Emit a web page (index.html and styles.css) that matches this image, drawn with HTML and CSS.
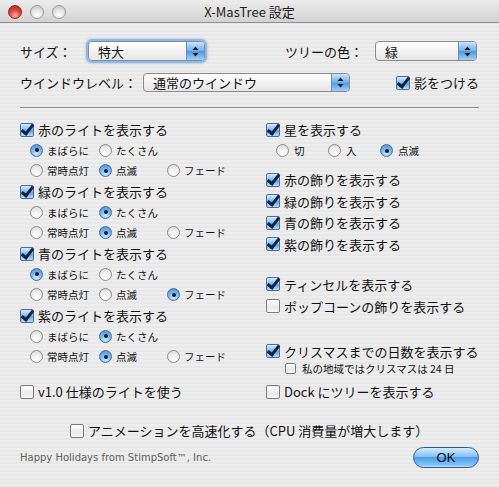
FILE: index.html
```html
<!DOCTYPE html>
<html lang="ja">
<head>
  <meta charset="UTF-8">
  <title>X-MasTree 設定</title>
  <link rel="stylesheet" href="styles.css">
</head>
<body>
  <div class="window">
    <div class="titlebar">
      <div class="lights">
        <span class="light close"></span>
        <span class="light"></span>
        <span class="light"></span>
      </div>
      <div class="title">X-MasTree 設定</div>
      <div></div>
    </div>

    <div class="content">
      <div class="top-row first">
        <span class="label size-label">サイズ：</span>
        <div class="popup focused size-popup">
          <span>特大</span>
          <span class="arrows"><svg width="7" height="11" viewBox="0 0 7 11"><path d="M3.5 0.5 L6.5 4 L0.5 4 Z M3.5 10.5 L6.5 7 L0.5 7 Z" fill="#1a1a1a"/></svg></span>
        </div>
        <span class="label color-label">ツリーの色：</span>
        <div class="popup color-popup">
          <span>緑</span>
          <span class="arrows"><svg width="7" height="11" viewBox="0 0 7 11"><path d="M3.5 0.5 L6.5 4 L0.5 4 Z M3.5 10.5 L6.5 7 L0.5 7 Z" fill="#1a1a1a"/></svg></span>
        </div>
      </div>

      <div class="top-row second">
        <span class="label level-label">ウインドウレベル：</span>
        <div class="popup level-popup">
          <span>通常のウインドウ</span>
          <span class="arrows"><svg width="7" height="11" viewBox="0 0 7 11"><path d="M3.5 0.5 L6.5 4 L0.5 4 Z M3.5 10.5 L6.5 7 L0.5 7 Z" fill="#1a1a1a"/></svg></span>
        </div>
        <label class="check shadow-check"><span class="cb on"></span>影をつける</label>
      </div>

      <hr class="sep">

      <div class="columns">
        <div class="col left">
          <div class="group">
            <label class="check"><span class="cb on"></span>赤のライトを表示する</label>
            <div class="radios">
              <span class="radio w1"><span class="rb on"></span>まばらに</span>
              <span class="radio"><span class="rb"></span>たくさん</span>
            </div>
            <div class="radios">
              <span class="radio w1"><span class="rb"></span>常時点灯</span>
              <span class="radio w2"><span class="rb on"></span>点滅</span>
              <span class="radio"><span class="rb"></span>フェード</span>
            </div>
          </div>
          <div class="group">
            <label class="check"><span class="cb on"></span>緑のライトを表示する</label>
            <div class="radios">
              <span class="radio w1"><span class="rb"></span>まばらに</span>
              <span class="radio"><span class="rb on"></span>たくさん</span>
            </div>
            <div class="radios">
              <span class="radio w1"><span class="rb"></span>常時点灯</span>
              <span class="radio w2"><span class="rb on"></span>点滅</span>
              <span class="radio"><span class="rb"></span>フェード</span>
            </div>
          </div>
          <div class="group">
            <label class="check"><span class="cb on"></span>青のライトを表示する</label>
            <div class="radios">
              <span class="radio w1"><span class="rb on"></span>まばらに</span>
              <span class="radio"><span class="rb"></span>たくさん</span>
            </div>
            <div class="radios">
              <span class="radio w1"><span class="rb"></span>常時点灯</span>
              <span class="radio w2"><span class="rb"></span>点滅</span>
              <span class="radio"><span class="rb on"></span>フェード</span>
            </div>
          </div>
          <div class="group">
            <label class="check"><span class="cb on"></span>紫のライトを表示する</label>
            <div class="radios">
              <span class="radio w1"><span class="rb"></span>まばらに</span>
              <span class="radio"><span class="rb on"></span>たくさん</span>
            </div>
            <div class="radios">
              <span class="radio w1"><span class="rb"></span>常時点灯</span>
              <span class="radio w2"><span class="rb on"></span>点滅</span>
              <span class="radio"><span class="rb"></span>フェード</span>
            </div>
          </div>
          <label class="check last"><span class="cb"></span>v1.0 仕様のライトを使う</label>
        </div>

        <div class="col right">
          <label class="check"><span class="cb on"></span>星を表示する</label>
          <div class="radios star">
            <span class="radio s1"><span class="rb"></span>切</span>
            <span class="radio s1"><span class="rb"></span>入</span>
            <span class="radio"><span class="rb on"></span>点滅</span>
          </div>
          <div class="decor">
            <label class="check"><span class="cb on"></span>赤の飾りを表示する</label>
            <label class="check"><span class="cb on"></span>緑の飾りを表示する</label>
            <label class="check"><span class="cb on"></span>青の飾りを表示する</label>
            <label class="check"><span class="cb on"></span>紫の飾りを表示する</label>
          </div>
          <div class="extras">
            <label class="check"><span class="cb on"></span>ティンセルを表示する</label>
            <label class="check"><span class="cb"></span>ポップコーンの飾りを表示する</label>
          </div>
          <label class="check days"><span class="cb on"></span>クリスマスまでの日数を表示する</label>
          <label class="check small"><span class="cb"></span>私の地域ではクリスマスは 24 日</label>
          <label class="check last"><span class="cb"></span>Dock にツリーを表示する</label>
        </div>
      </div>

      <label class="check anim"><span class="cb"></span>アニメーションを高速化する（CPU 消費量が増大します）</label>

      <div class="footer">
        <span class="credit">Happy Holidays from StimpSoft™, Inc.</span>
        <button class="ok">OK</button>
      </div>
    </div>
  </div>
</body>
</html>
```

FILE: styles.css
```css
body {
  margin: 0;
  font-family: "Noto Sans CJK JP", "Liberation Sans", sans-serif;
  color: #111;
}
.window {
  width: 499px;
  height: 487px;
  background: repeating-linear-gradient(#ededed 0 2px, #e7e7e7 2px 4px);
  overflow: hidden;
}
.titlebar {
  height: 22px;
  display: grid;
  grid-template-columns: 1fr auto 1fr;
  align-items: center;
  background: linear-gradient(#ececec, #d2d2d2);
  border-bottom: 1px solid #8f8f8f;
}
.lights {
  display: flex;
  gap: 8px;
  padding-left: 8px;
  padding-top: 1px;
}
.light {
  width: 12px;
  height: 12px;
  border-radius: 50%;
  border: 1px solid #9a9a9a;
  background: radial-gradient(circle at 50% 75%, #ffffff 0, #e6e6e6 45%, #bdbdbd 100%);
  box-sizing: content-box;
}
.light.close {
  border-color: #8e2a2a;
  background: radial-gradient(circle at 50% 78%, #ffb0a8 0, #e14a40 45%, #a81c14 100%);
}
.title {
  font-size: 13px;
  color: #1c1c1c;
}
.content {
  padding: 18px 20px 0 20px;
}
.label {
  font-size: 13px;
}
.top-row {
  display: flex;
  align-items: center;
}
.top-row.first {
  height: 20px;
}
.top-row.second {
  height: 19px;
  margin-top: 12px;
}
.size-label {
  width: 68px;
}
.color-label {
  width: 90px;
  margin-left: 80px;
}
.level-label {
  width: 123px;
}
.popup {
  box-sizing: border-box;
  height: 100%;
  display: flex;
  align-items: center;
  justify-content: space-between;
  padding-left: 9px;
  font-size: 13px;
  border: 1px solid #8a8a8a;
  border-radius: 4px;
  background: linear-gradient(#ffffff, #f2f2f2 50%, #e6e6e6);
  overflow: hidden;
}
.popup.focused {
  box-shadow: 0 0 0 2px #8fb8e6, 0 0 2px 3px #b9d3f1;
}
.size-popup {
  width: 117px;
}
.color-popup {
  width: 102px;
}
.level-popup {
  width: 207px;
}
.arrows {
  width: 17px;
  height: 100%;
  display: flex;
  align-items: center;
  justify-content: center;
  background: linear-gradient(#cbe4fb, #6daee9 50%, #4c97e0 51%, #9fd0fa);
  border-left: 1px solid #6f8fb5;
}
.check {
  display: flex;
  align-items: center;
  height: 21px;
  font-size: 13px;
  white-space: nowrap;
}
.cb {
  position: relative;
  box-sizing: border-box;
  width: 14px;
  height: 14px;
  margin-right: 4px;
  border: 1px solid #7b7b7b;
  border-radius: 2px;
  background: linear-gradient(#ffffff, #e9e9e9 60%, #f6f6f6);
  flex: none;
}
.cb.on {
  border-color: #4c6e98;
  background: linear-gradient(#d9ecfd, #79b8f0 50%, #5aa2e8 55%, #b6dcfb);
}
.cb.on::after {
  content: "";
  position: absolute;
  left: 3px;
  top: -2px;
  width: 4px;
  height: 10px;
  border-right: 3px solid #14213d;
  border-bottom: 3px solid #14213d;
  transform: rotate(38deg);
}
.shadow-check {
  margin-left: auto;
}
.sep {
  margin: 15px 0 0 0;
  border: none;
  border-top: 1px solid #8e8e8e;
  height: 0;
}
.columns {
  display: grid;
  grid-template-columns: 246px 1fr;
  margin-top: 11px;
}
.radios {
  display: flex;
  align-items: center;
  height: 20.5px;
  padding-left: 10px;
  font-size: 10.5px;
  white-space: nowrap;
}
.radio {
  display: flex;
  align-items: center;
}
.radio.w1 {
  width: 69px;
}
.radio.w2 {
  width: 68px;
}
.rb {
  position: relative;
  box-sizing: border-box;
  width: 13px;
  height: 13px;
  margin-right: 4px;
  border-radius: 50%;
  border: 1px solid #8a8a8a;
  background: radial-gradient(circle at 50% 80%, #ffffff 0, #efefef 50%, #d2d2d2 100%);
  flex: none;
}
.rb.on {
  border-color: #476d9b;
  background: radial-gradient(circle at 50% 80%, #cfeafe 0, #6fb2ee 55%, #3f86d4 100%);
}
.rb.on::after {
  content: "";
  position: absolute;
  left: 3.5px;
  top: 3.5px;
  width: 4px;
  height: 4px;
  border-radius: 50%;
  background: #111a2c;
}
.left .last {
  margin-top: 14px;
}
.right .radios.star {
  height: 21px;
}
.radio.s1 {
  width: 52px;
}
.star .rb {
  margin-right: 5px;
}
.decor {
  margin-top: 8px;
}
.decor .check {
  height: 21.5px;
}
.extras {
  margin-top: 18px;
}
.extras .check {
  height: 22px;
}
.days {
  margin-top: 24px;
  height: 20px;
}
.check.small {
  height: 14px;
  padding-left: 19px;
  font-size: 10.5px;
}
.small .cb {
  width: 11px;
  height: 11px;
  margin-right: 6px;
}
.right .last {
  margin-top: 6px;
}
.anim {
  margin-top: 18px;
  margin-left: 50px;
}
.footer {
  display: flex;
  align-items: center;
  justify-content: space-between;
  height: 21px;
  margin-top: 6px;
}
.credit {
  font-family: "DejaVu Sans", sans-serif;
  font-size: 10px;
  color: #5e5e5e;
}
.ok {
  width: 66px;
  height: 21px;
  margin-right: 0;
  border: 1px solid #34598c;
  border-radius: 11px;
  background: linear-gradient(#d3ebfe, #86c2f5 45%, #4d9de8 50%, #80c4fa 90%, #bfe3fd);
  font-family: "Liberation Sans", sans-serif;
  font-size: 13px;
  color: #0b0b0b;
  padding: 0;
}
```
